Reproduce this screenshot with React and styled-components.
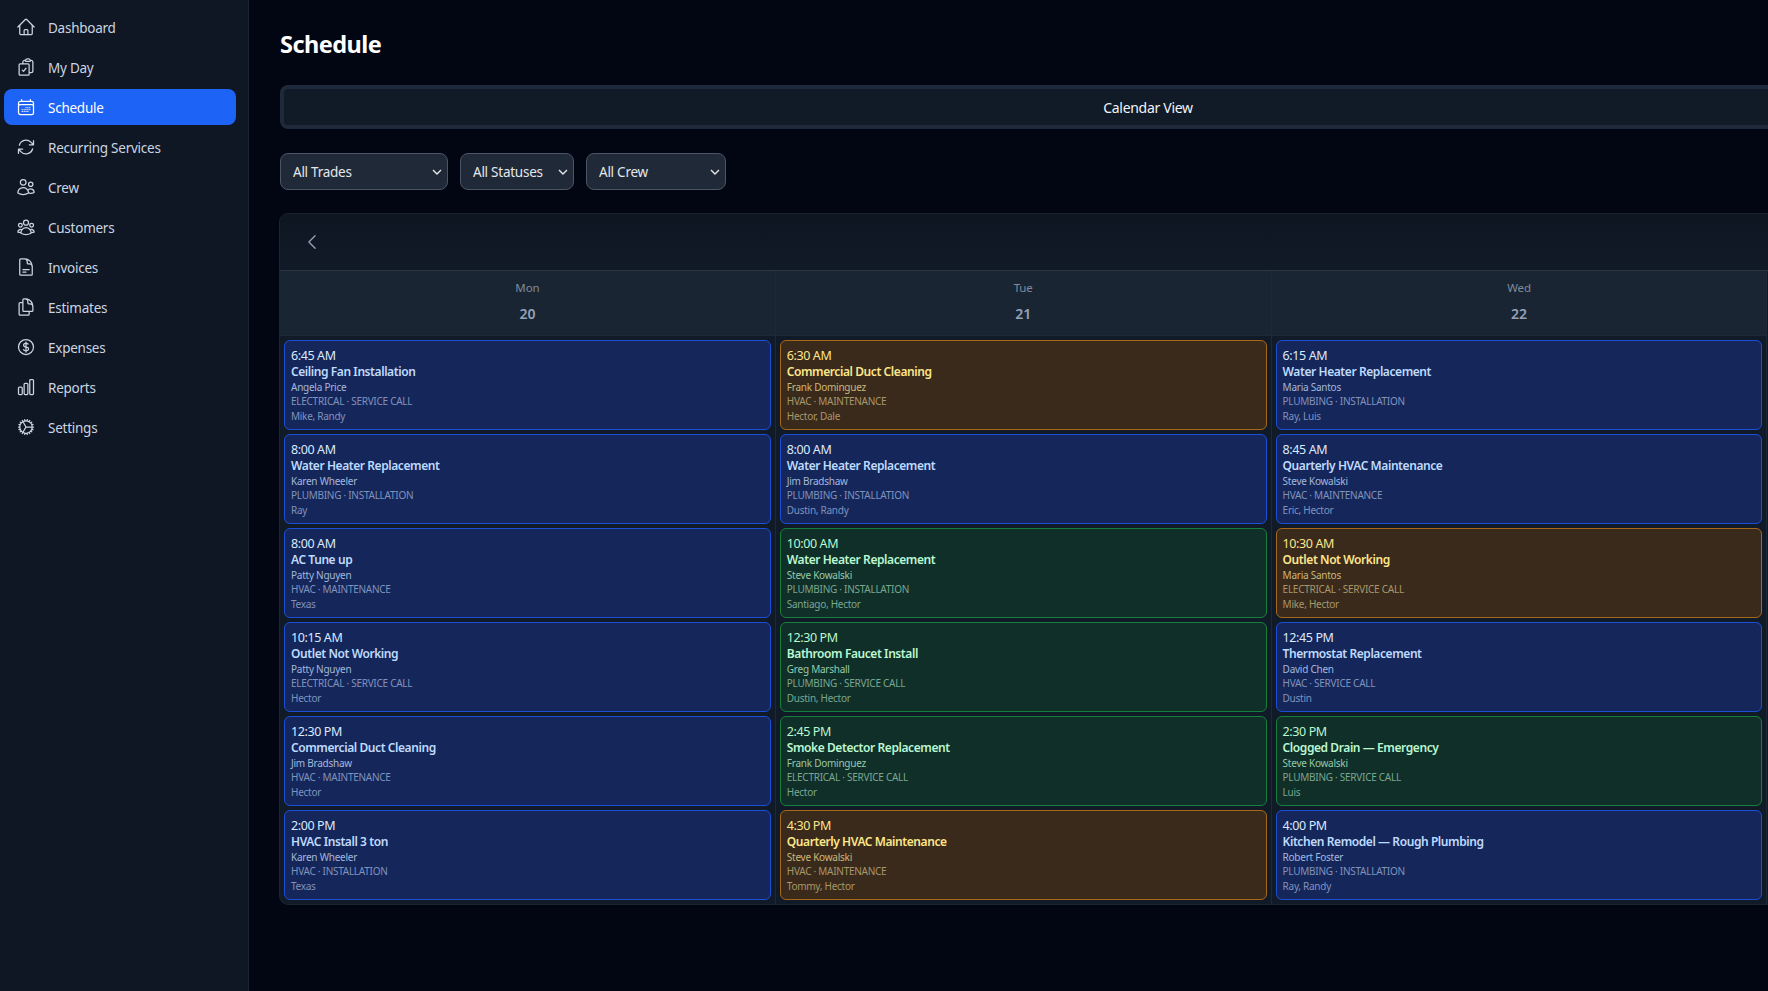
import styled, { createGlobalStyle } from "styled-components";
import {
  HiOutlineHome,
  HiOutlineClipboardDocumentCheck,
  HiOutlineCalendarDays,
  HiOutlineArrowPath,
  HiOutlineUsers,
  HiOutlineUserGroup,
  HiOutlineDocumentText,
  HiOutlineDocumentDuplicate,
  HiOutlineCurrencyDollar,
  HiOutlineChartBar,
  HiOutlineCog,
  HiOutlineChevronLeft,
} from "react-icons/hi2";

const GlobalStyle = createGlobalStyle`
  html, body {
    margin: 0;
    height: 100%;
    background: #020512;
    color-scheme: dark;
  }
  body {
    font-family: "Noto Sans", "Open Sans", sans-serif;
    overflow: hidden;
  }
  * { box-sizing: border-box; }
`;

const tones = {
  blue: {
    bg: "#15265a",
    border: "#1d4ed8",
    time: "#dbeafe",
    title: "#bfdbfe",
    client: "#a3b8dd",
    meta: "#8093bd",
  },
  amber: {
    bg: "#3a2a1c",
    border: "#a8681c",
    time: "#fde68a",
    title: "#fde68a",
    client: "#cbb879",
    meta: "#a8976a",
  },
  green: {
    bg: "#0f2f28",
    border: "#15803d",
    time: "#bbf7d0",
    title: "#bbf7d0",
    client: "#97c9ab",
    meta: "#7ba690",
  },
};

const chevron = encodeURIComponent(
  '<svg xmlns="http://www.w3.org/2000/svg" width="10" height="6" viewBox="0 0 10 6"><path d="M1 1l4 4 4-4" fill="none" stroke="#e5e7eb" stroke-width="1.4"/></svg>'
);

const Page = styled.div`
  display: flex;
  width: 100vw;
  height: 100vh;
  overflow: hidden;
`;

const Sidebar = styled.nav`
  flex: 0 0 249px;
  display: flex;
  flex-direction: column;
  gap: 4px;
  padding: 9px 12px 0 4px;
  background: #0f1725;
  border-right: 1px solid #1a2332;
`;

const NavItem = styled.a`
  display: flex;
  align-items: center;
  gap: 12px;
  height: 36px;
  padding-left: 12px;
  border-radius: 8px;
  font-size: 13.5px;
  letter-spacing: -0.25px;
  color: ${(p) => (p.$active ? "#ffffff" : "#cbd5e1")};
  background: ${(p) => (p.$active ? "#1d63f5" : "transparent")};

  svg {
    flex: none;
    width: 20px;
    height: 20px;
  }
`;

const NavLabel = styled.span`
  padding-top: 2px;
`;

const Main = styled.main`
  flex: 1;
  min-width: 0;
  padding: 27px 0 0 31px;
  overflow: hidden;
`;

const Content = styled.div`
  width: 1736px;
`;

const Title = styled.h1`
  margin: 0;
  height: 34px;
  font-size: 23.5px;
  line-height: 34px;
  font-weight: 700;
  letter-spacing: -0.55px;
  color: #ffffff;
`;

const TabBar = styled.div`
  height: 44px;
  margin-top: 24px;
  border: 4px solid #1e293b;
  border-radius: 8px;
  background: #111a27;
`;

const Tab = styled.button`
  display: block;
  width: 100%;
  height: 100%;
  border: 0;
  background: transparent;
  font: inherit;
  font-size: 14px;
  letter-spacing: -0.3px;
  color: #f1f5f9;
`;

const Filters = styled.div`
  display: flex;
  gap: 12px;
  margin-top: 24px;
`;

const Select = styled.select`
  appearance: none;
  width: ${(p) => p.$width}px;
  height: 37px;
  padding: 0 12px;
  border: 1px solid #4b5563;
  border-radius: 8px;
  background: #1f2937 url("data:image/svg+xml,${chevron}") no-repeat right 5px center;
  font: inherit;
  font-size: 13.5px;
  letter-spacing: -0.25px;
  color: #e5e7eb;
`;

const Calendar = styled.section`
  margin-top: 24px;
  border-radius: 8px;
  background: #111a27;
  box-shadow: 0 0 0 1px #1a2433;
  overflow: hidden;
`;

const CalendarBar = styled.div`
  display: flex;
  align-items: center;
  height: 57px;
  padding-left: 22px;
  background: linear-gradient(#0e1622, #111a27);
  border-bottom: 1px solid #2c3643;
  color: #94a3b8;

  svg {
    width: 20px;
    height: 20px;
  }
`;

const Columns = styled.div`
  display: grid;
  grid-template-columns: repeat(3, 495.8px);
`;

const Column = styled.div`
  display: flex;
  flex-direction: column;
  border-right: 1px solid #1e2937;
`;

const DayHead = styled.div`
  display: flex;
  flex-direction: column;
  align-items: center;
  height: 65px;
  padding-top: 8px;
  background: #1a2533;
  border-bottom: 1px solid #1e2937;
`;

const DayName = styled.span`
  font-size: 11.5px;
  line-height: 18px;
  letter-spacing: -0.1px;
  color: #7f8b9c;
`;

const DayNumber = styled.span`
  margin-top: 8px;
  font-size: 14px;
  line-height: 18px;
  font-weight: 600;
  color: #94a3b8;
`;

const CardList = styled.div`
  display: flex;
  flex-direction: column;
  gap: 4px;
  padding: 4px;
`;

const Card = styled.article`
  height: 90px;
  padding: 7px 6px 0;
  border: 1px solid ${(p) => tones[p.$tone].border};
  border-radius: 6px;
  background: ${(p) => tones[p.$tone].bg};
`;

const Time = styled.div`
  font-size: 12.5px;
  line-height: 16px;
  letter-spacing: -0.4px;
  color: ${(p) => tones[p.$tone].time};
`;

const JobName = styled.div`
  font-size: 12px;
  line-height: 16px;
  font-weight: 600;
  letter-spacing: -0.42px;
  color: ${(p) => tones[p.$tone].title};
`;

const Client = styled.div`
  font-size: 10px;
  line-height: 14px;
  letter-spacing: -0.25px;
  color: ${(p) => tones[p.$tone].client};
`;

const Meta = styled.div`
  font-size: 10px;
  line-height: 15px;
  letter-spacing: -0.27px;
  color: ${(p) => tones[p.$tone].meta};
`;

const navItems = [
  { label: "Dashboard", Icon: HiOutlineHome },
  { label: "My Day", Icon: HiOutlineClipboardDocumentCheck },
  { label: "Schedule", Icon: HiOutlineCalendarDays, active: true },
  { label: "Recurring Services", Icon: HiOutlineArrowPath },
  { label: "Crew", Icon: HiOutlineUsers },
  { label: "Customers", Icon: HiOutlineUserGroup },
  { label: "Invoices", Icon: HiOutlineDocumentText },
  { label: "Estimates", Icon: HiOutlineDocumentDuplicate },
  { label: "Expenses", Icon: HiOutlineCurrencyDollar },
  { label: "Reports", Icon: HiOutlineChartBar },
  { label: "Settings", Icon: HiOutlineCog },
];

const days = [
  {
    name: "Mon",
    date: 20,
    jobs: [
      ["blue", "6:45 AM", "Ceiling Fan Installation", "Angela Price", "ELECTRICAL · SERVICE CALL", "Mike, Randy"],
      ["blue", "8:00 AM", "Water Heater Replacement", "Karen Wheeler", "PLUMBING · INSTALLATION", "Ray"],
      ["blue", "8:00 AM", "AC Tune up", "Patty Nguyen", "HVAC · MAINTENANCE", "Texas"],
      ["blue", "10:15 AM", "Outlet Not Working", "Patty Nguyen", "ELECTRICAL · SERVICE CALL", "Hector"],
      ["blue", "12:30 PM", "Commercial Duct Cleaning", "Jim Bradshaw", "HVAC · MAINTENANCE", "Hector"],
      ["blue", "2:00 PM", "HVAC Install 3 ton", "Karen Wheeler", "HVAC · INSTALLATION", "Texas"],
    ],
  },
  {
    name: "Tue",
    date: 21,
    jobs: [
      ["amber", "6:30 AM", "Commercial Duct Cleaning", "Frank Dominguez", "HVAC · MAINTENANCE", "Hector, Dale"],
      ["blue", "8:00 AM", "Water Heater Replacement", "Jim Bradshaw", "PLUMBING · INSTALLATION", "Dustin, Randy"],
      ["green", "10:00 AM", "Water Heater Replacement", "Steve Kowalski", "PLUMBING · INSTALLATION", "Santiago, Hector"],
      ["green", "12:30 PM", "Bathroom Faucet Install", "Greg Marshall", "PLUMBING · SERVICE CALL", "Dustin, Hector"],
      ["green", "2:45 PM", "Smoke Detector Replacement", "Frank Dominguez", "ELECTRICAL · SERVICE CALL", "Hector"],
      ["amber", "4:30 PM", "Quarterly HVAC Maintenance", "Steve Kowalski", "HVAC · MAINTENANCE", "Tommy, Hector"],
    ],
  },
  {
    name: "Wed",
    date: 22,
    jobs: [
      ["blue", "6:15 AM", "Water Heater Replacement", "Maria Santos", "PLUMBING · INSTALLATION", "Ray, Luis"],
      ["blue", "8:45 AM", "Quarterly HVAC Maintenance", "Steve Kowalski", "HVAC · MAINTENANCE", "Eric, Hector"],
      ["amber", "10:30 AM", "Outlet Not Working", "Maria Santos", "ELECTRICAL · SERVICE CALL", "Mike, Hector"],
      ["blue", "12:45 PM", "Thermostat Replacement", "David Chen", "HVAC · SERVICE CALL", "Dustin"],
      ["green", "2:30 PM", "Clogged Drain — Emergency", "Steve Kowalski", "PLUMBING · SERVICE CALL", "Luis"],
      ["blue", "4:00 PM", "Kitchen Remodel — Rough Plumbing", "Robert Foster", "PLUMBING · INSTALLATION", "Ray, Randy"],
    ],
  },
];

const filters = [
  { label: "All Trades", width: 168 },
  { label: "All Statuses", width: 114 },
  { label: "All Crew", width: 140 },
];

function JobCard({ job }) {
  const [tone, time, title, client, type, crew] = job;
  return (
    <Card $tone={tone}>
      <Time $tone={tone}>{time}</Time>
      <JobName $tone={tone}>{title}</JobName>
      <Client $tone={tone}>{client}</Client>
      <Meta $tone={tone}>{type}</Meta>
      <Meta $tone={tone}>{crew}</Meta>
    </Card>
  );
}

export default function App() {
  return (
    <Page>
      <GlobalStyle />
      <Sidebar>
        {navItems.map(({ label, Icon, active }) => (
          <NavItem key={label} $active={active}>
            <Icon />
            <NavLabel>{label}</NavLabel>
          </NavItem>
        ))}
      </Sidebar>
      <Main>
        <Content>
          <Title>Schedule</Title>
          <TabBar>
            <Tab>Calendar View</Tab>
          </TabBar>
          <Filters>
            {filters.map((f) => (
              <Select key={f.label} $width={f.width}>
                <option>{f.label}</option>
              </Select>
            ))}
          </Filters>
          <Calendar>
            <CalendarBar>
              <HiOutlineChevronLeft />
            </CalendarBar>
            <Columns>
              {days.map((day) => (
                <Column key={day.name}>
                  <DayHead>
                    <DayName>{day.name}</DayName>
                    <DayNumber>{day.date}</DayNumber>
                  </DayHead>
                  <CardList>
                    {day.jobs.map((job) => (
                      <JobCard key={job[1] + job[2]} job={job} />
                    ))}
                  </CardList>
                </Column>
              ))}
            </Columns>
          </Calendar>
        </Content>
      </Main>
    </Page>
  );
}
